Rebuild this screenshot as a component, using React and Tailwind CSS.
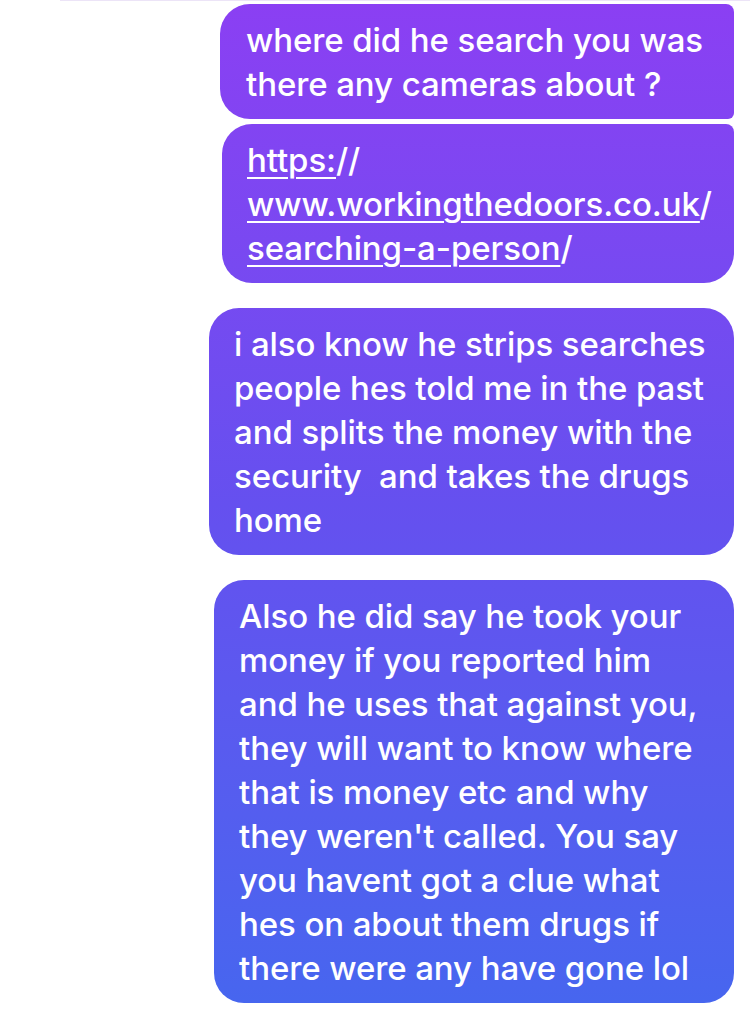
import React from 'react';

const bubble =
  'bg-linear-to-b from-[#8b3ff3] via-[#6550ef] to-[#4666ef] bg-fixed text-white px-[25px] py-[13.5px] text-[33px] leading-[44px] tracking-[-0.1px] font-medium whitespace-nowrap';

function Link({ children }) {
  return <span className="underline decoration-2 underline-offset-[5px]">{children}</span>;
}

export default function App() {
  return (
    <div className="min-h-screen w-full bg-white" style={{ fontFamily: 'Inter, "Noto Sans", sans-serif' }}>
      {/* tail of the previous bubble peeking in at the top */}
      <div className="h-px ml-[60px] bg-[#ece4f7]"></div>

      <div className="flex flex-col items-end pr-4 pt-[3px]">
        <div className={`${bubble} w-[514px] pl-[26px] rounded-l-[30px] rounded-tr-[8px] rounded-br-[6px]`}>
          where did he search you was
          <br />
          there any cameras about ?
        </div>

        <div className={`${bubble} w-[512px] mt-[5px] rounded-l-[30px] rounded-tr-[8px] rounded-br-[30px]`}>
          <Link>https:</Link>//
          <br />
          <Link>www.workingthedoors.co.uk</Link>/
          <br />
          <Link>searching-a-person</Link>/
        </div>

        <div className={`${bubble} w-[525px] mt-[25px] rounded-[30px]`}>
          i also know he strips searches
          <br />
          people hes told me in the past
          <br />
          and splits the money with the
          <br />
          security&nbsp; and takes the drugs
          <br />
          home
        </div>

        <div className={`${bubble} w-[520px] mt-[25px] rounded-[30px]`}>
          Also he did say he took your
          <br />
          money if you reported him
          <br />
          and he uses that against you,
          <br />
          they will want to know where
          <br />
          that is money etc and why
          <br />
          they weren't called. You say
          <br />
          you havent got a clue what
          <br />
          hes on about them drugs if
          <br />
          there were any have gone lol
        </div>
      </div>
    </div>
  );
}
